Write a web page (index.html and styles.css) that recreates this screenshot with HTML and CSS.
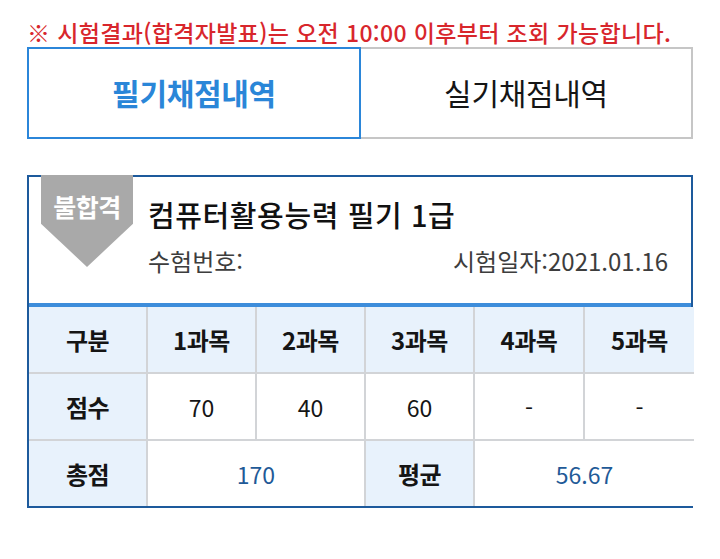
FILE: index.html
```html
<!DOCTYPE html>
<html lang="ko">
<head>
<meta charset="utf-8">
<link rel="stylesheet" href="styles.css">
</head>
<body>
<div class="page">
  <p class="notice">※ 시험결과(합격자발표)는 오전 10:00 이후부터 조회 가능합니다.</p>
  <div class="tabs">
    <div class="tab active">필기채점내역</div>
    <div class="tab">실기채점내역</div>
  </div>
  <div class="card">
    <div class="card-head">
      <div class="badge">불합격</div>
      <div class="head-info">
        <div class="title">컴퓨터활용능력 필기 1급</div>
        <div class="meta">
          <span>수험번호:</span>
          <span>시험일자:2021.01.16</span>
        </div>
      </div>
    </div>
    <table class="scores">
      <colgroup>
        <col class="c0"><col class="c1"><col class="c1"><col class="c1"><col class="c2"><col class="c2">
      </colgroup>
      <tr class="hrow">
        <th>구분</th><th>1과목</th><th>2과목</th><th>3과목</th><th>4과목</th><th>5과목</th>
      </tr>
      <tr>
        <th>점수</th><td>70</td><td>40</td><td>60</td><td>-</td><td>-</td>
      </tr>
      <tr>
        <th>총점</th><td colspan="2" class="sum">170</td><th>평균</th><td colspan="2" class="sum">56.67</td>
      </tr>
    </table>
  </div>
</div>
</body>
</html>
```
FILE: styles.css
```css
html, body {
  margin: 0;
  padding: 0;
  background: #ffffff;
}
body {
  font-family: "Noto Sans CJK KR", "Noto Sans", sans-serif;
  color: #111;
}
.page {
  width: 666px;
  padding: 17px 0 0 27px;
}
.notice {
  margin: 0;
  height: 30px;
  line-height: 30px;
  font-size: 23px;
  font-weight: 500;
  color: #d8262c;
  letter-spacing: 0.35px;
  white-space: nowrap;
}
.tabs {
  display: flex;
  height: 92px;
}
.tab {
  flex: 1;
  display: flex;
  align-items: center;
  justify-content: center;
  font-size: 30px;
  letter-spacing: -0.3px;
  border: 2px solid #c6c6c6;
  border-left: none;
  color: #151515;
  padding-bottom: 2px;
}
.tab.active {
  border: 2px solid #2b86d9;
  color: #2a86d8;
  font-weight: 700;
}
.card {
  margin-top: 36px;
  border: 2px solid #1d5a9c;
}
.card-head {
  position: relative;
  height: 126px;
  border-bottom: 4px solid #3d8ddb;
  display: flex;
}
.badge {
  position: absolute;
  left: 12px;
  top: -2px;
  width: 92px;
  height: 92px;
  background: #a9a9a9;
  color: #fff;
  font-size: 25px;
  font-weight: 700;
  text-align: center;
  line-height: 62px;
  letter-spacing: -0.5px;
  clip-path: polygon(0 0, 100% 0, 100% 53%, 50% 100%, 0 53%);
}
.head-info {
  flex: 1;
  padding: 17px 23px 0 119px;
  display: flex;
  flex-direction: column;
}
.title {
  font-size: 29px;
  font-weight: 500;
  line-height: 40px;
  letter-spacing: 0.6px;
}
.meta {
  display: flex;
  justify-content: space-between;
  margin-top: 10px;
  font-size: 24px;
  line-height: 34px;
  color: #3d3d3d;
}
.scores {
  width: 100%;
  table-layout: fixed;
  border-collapse: collapse;
}
.c0 { width: 118px; }
.c1 { width: 109px; }
.c2 { width: 110px; }
.scores th, .scores td {
  height: 65px;
  padding: 0;
  text-align: center;
  font-size: 23px;
  border: 2px solid #d2d4d7;
}
.scores tr:first-child th { border-top: none; }
.scores tr:last-child th, .scores tr:last-child td { border-bottom: none; }
.scores th:first-child { border-left: none; }
.scores tr > *:last-child { border-right: none; }
.scores th {
  background: #e8f2fc;
  font-weight: 700;
  font-size: 24px;
  color: #151515;
  letter-spacing: -0.5px;
}
.scores td {
  background: #fff;
  font-weight: 400;
  color: #151515;
}
.scores td.sum {
  color: #1f5a97;
}
```
